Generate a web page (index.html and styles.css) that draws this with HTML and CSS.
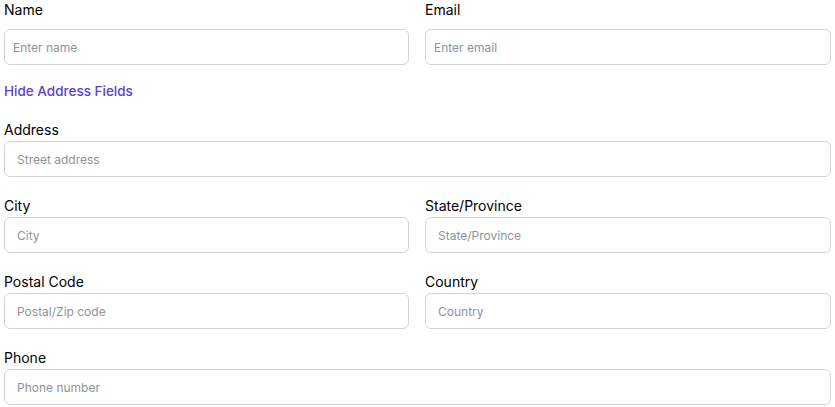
FILE: index.html
```html
<!DOCTYPE html>
<html lang="en">
<head>
<meta charset="utf-8">
<title>Contact form</title>
<link rel="stylesheet" href="styles.css">
</head>
<body>
<form class="form">
  <div class="row two top-row">
    <div class="field">
      <label class="label" for="name">Name</label>
      <input class="input compact" id="name" type="text" placeholder="Enter name">
    </div>
    <div class="field">
      <label class="label" for="email">Email</label>
      <input class="input compact" id="email" type="email" placeholder="Enter email">
    </div>
  </div>

  <a class="toggle" href="#">Hide Address Fields</a>

  <div class="row">
    <div class="field">
      <label class="label" for="addr">Address</label>
      <input class="input" id="addr" type="text" placeholder="Street address">
    </div>
  </div>

  <div class="row two">
    <div class="field">
      <label class="label" for="city">City</label>
      <input class="input" id="city" type="text" placeholder="City">
    </div>
    <div class="field">
      <label class="label" for="state">State/Province</label>
      <input class="input" id="state" type="text" placeholder="State/Province">
    </div>
  </div>

  <div class="row two">
    <div class="field">
      <label class="label" for="zip">Postal Code</label>
      <input class="input" id="zip" type="text" placeholder="Postal/Zip code">
    </div>
    <div class="field">
      <label class="label" for="country">Country</label>
      <input class="input" id="country" type="text" placeholder="Country">
    </div>
  </div>

  <div class="row">
    <div class="field">
      <label class="label" for="phone">Phone</label>
      <input class="input" id="phone" type="tel" placeholder="Phone number">
    </div>
  </div>
</form>
</body>
</html>
```

FILE: styles.css
```css
* { box-sizing: border-box; }

html, body {
  margin: 0;
  padding: 0;
  background: #ffffff;
}

body {
  font-family: Inter, "Noto Sans", "Liberation Sans", sans-serif;
  color: #111111;
}

.form {
  display: flex;
  flex-direction: column;
  padding: 0 4px;
}

.row {
  display: grid;
  grid-template-columns: 1fr;
  gap: 16px;
  margin-bottom: 19px;
}

.row.two {
  grid-template-columns: 405px 1fr;
}

.top-row {
  margin-bottom: 16px;
}

.field {
  display: flex;
  flex-direction: column;
}

.label {
  font-size: 14px;
  line-height: 20px;
  font-weight: 400;
  color: #000000;
  margin-bottom: 1px;
}

.top-row .label {
  margin-bottom: 9px;
}

.input {
  height: 36px;
  width: 100%;
  border: 1px solid #d4d4d8;
  border-radius: 6px;
  padding: 0 12px;
  font-family: inherit;
  font-size: 12px;
  color: #111;
  background: #fff;
  outline: none;
}

.input.compact {
  padding: 0 8px;
}

.input::placeholder {
  color: #90939a;
  opacity: 1;
}

.toggle {
  display: block;
  font-size: 13.5px;
  line-height: 20px;
  font-weight: 500;
  color: #5b40d6;
  text-decoration: none;
  margin-bottom: 19px;
  align-self: flex-start;
}
```
